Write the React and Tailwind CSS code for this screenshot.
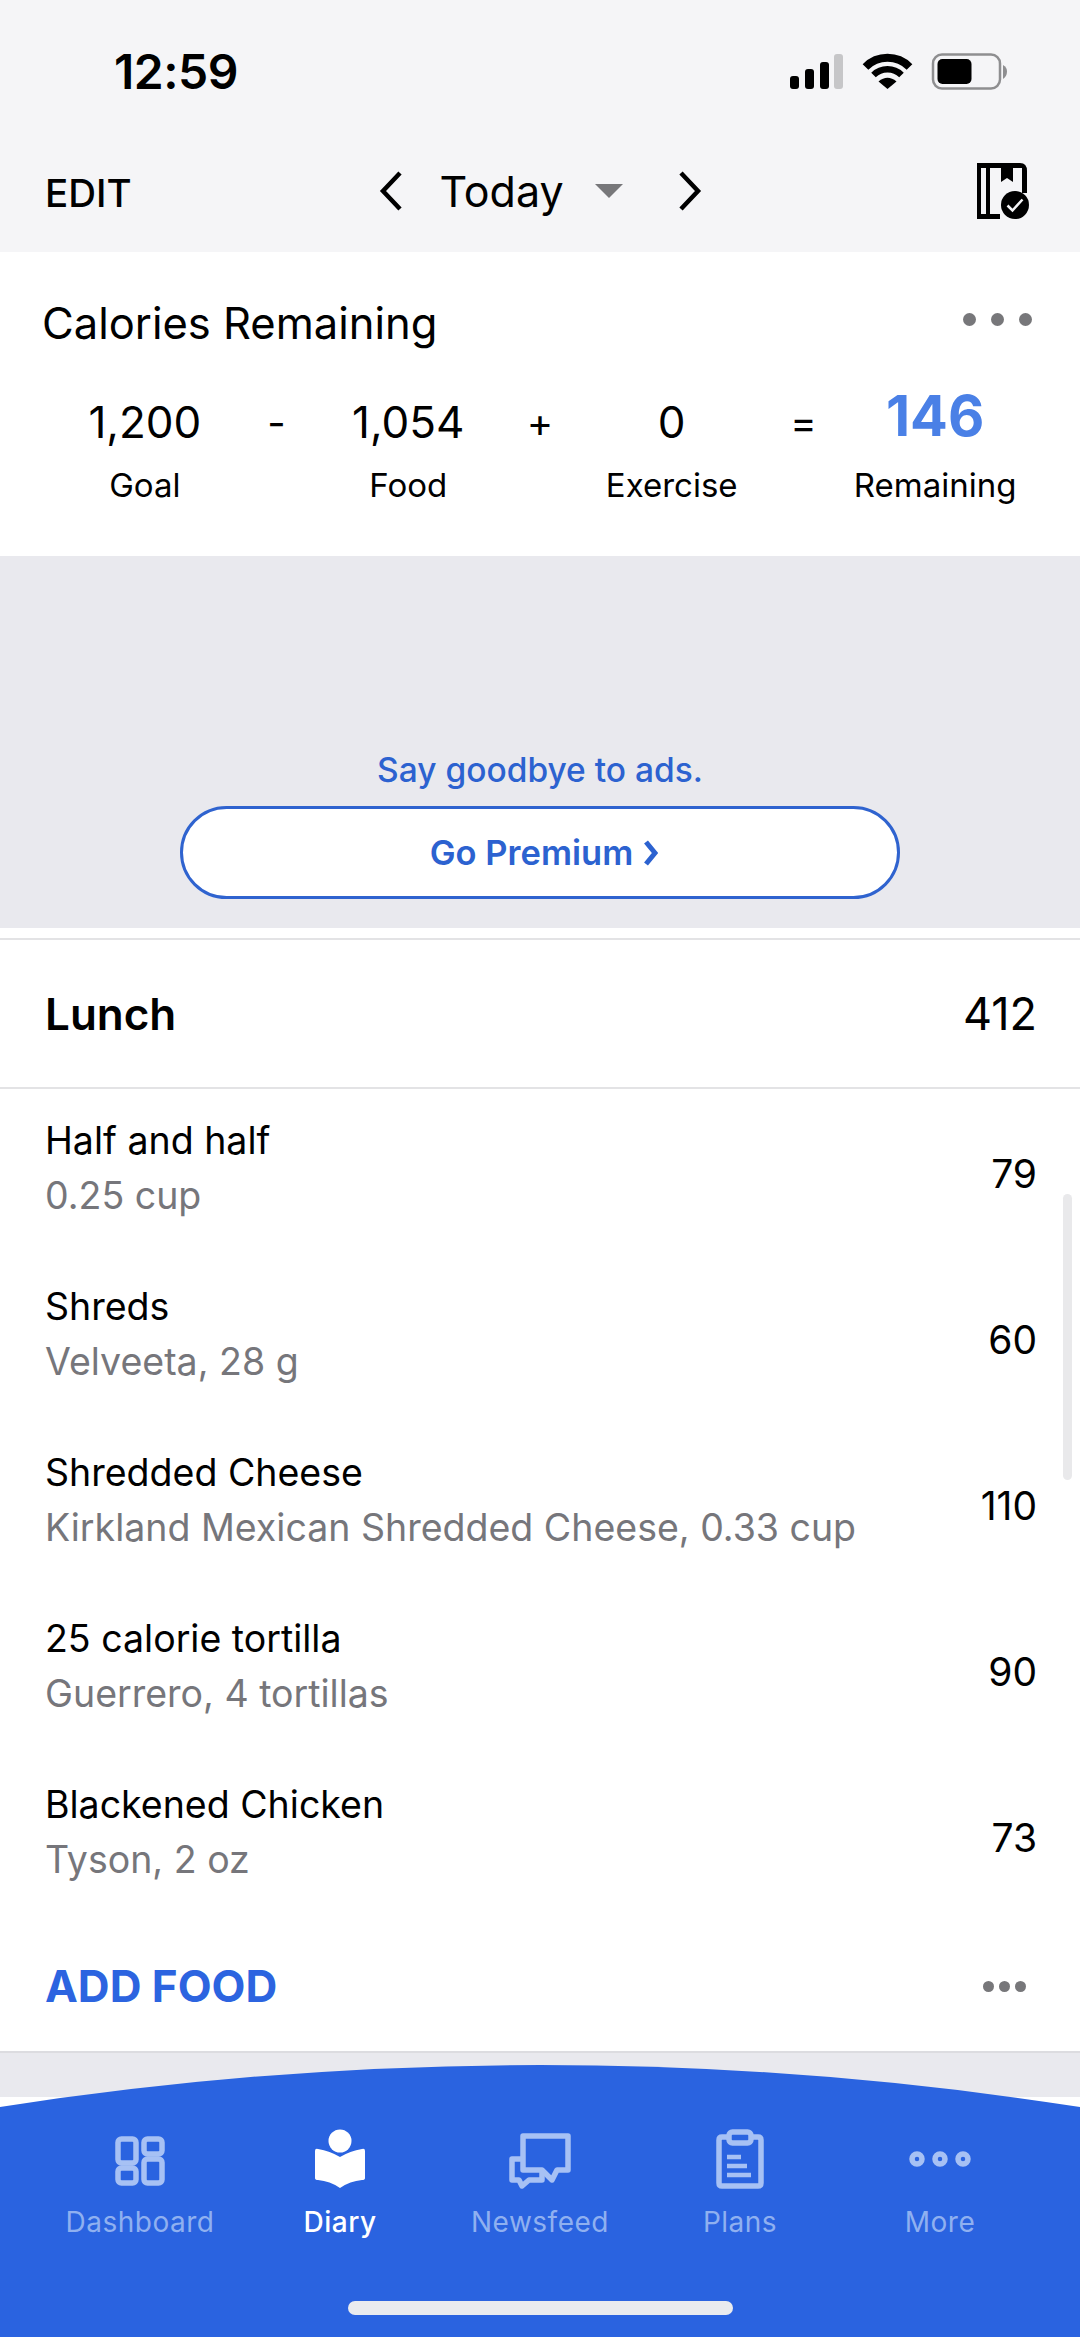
import React from 'react';

const font = { fontFamily: 'Inter, "Liberation Sans", sans-serif' };

const stats = [
  { value: '1,200', label: 'Goal' },
  { op: '-' },
  { value: '1,054', label: 'Food' },
  { op: '+' },
  { value: '0', label: 'Exercise' },
  { op: '=' },
  { value: '146', label: 'Remaining', highlight: true },
];

const foods = [
  { name: 'Half and half', detail: '0.25 cup', cal: 79 },
  { name: 'Shreds', detail: 'Velveeta, 28 g', cal: 60 },
  { name: 'Shredded Cheese', detail: 'Kirkland Mexican Shredded Cheese, 0.33 cup', cal: 110 },
  { name: '25 calorie tortilla', detail: 'Guerrero, 4 tortillas', cal: 90 },
  { name: 'Blackened Chicken', detail: 'Tyson, 2 oz', cal: 73 },
];

function StatusIcons() {
  return (
    <svg width="218" height="38" viewBox="0 0 218 38" className="block">
      <rect x="0" y="23" width="9" height="13" rx="3" fill="#000" />
      <rect x="15" y="16" width="9" height="20" rx="3" fill="#000" />
      <rect x="30" y="9" width="9" height="27" rx="3" fill="#000" />
      <rect x="44" y="1" width="9" height="35" rx="3" fill="#c6c6c8" />
      <path d="M75.500 14 A31 31 0 0 1 119.500 14" fill="none" stroke="#000" strokeWidth="8" />
      <path d="M83.500 22 A20 20 0 0 1 111.500 22" fill="none" stroke="#000" strokeWidth="6.500" />
      <path d="M88.500 28.500 Q97.500 21 106.500 28.500 L97.500 36 Z" fill="#000" />
      <rect x="143" y="1.500" width="67" height="34" rx="9" fill="none" stroke="#8e8e90" strokeWidth="2.500" />
      <rect x="147.500" y="6" width="34" height="25" rx="5" fill="#000" />
      <path d="M213 12 Q217 14 217 18.500 Q217 23 213 26 Z" fill="#8e8e90" />
    </svg>
  );
}

function DiaryCheckIcon() {
  return (
    <svg width="54" height="57" viewBox="0 0 54 57" className="block">
      <path d="M1 0H44Q51 0 51 8V30H46V5H37V19L31 15L25 19V5H14V51H24V56H1ZM5 5V51H10V5Z" fill="#000" fillRule="evenodd" />
      <circle cx="39" cy="42" r="14" fill="#000" />
      <path d="M31.500 42.500L36.500 47.500L46.500 36.500" fill="none" stroke="#f5f5f7" strokeWidth="2.500" />
    </svg>
  );
}

function DashboardIcon() {
  return (
    <svg width="50" height="50" viewBox="0 0 50 50" fill="none" stroke="#a7c1f4" strokeWidth="5.500" className="block mt-[4px]">
      <rect x="3" y="3" width="18" height="24" rx="3.500" />
      <rect x="29" y="3" width="18" height="15" rx="3.500" />
      <rect x="3" y="32" width="18" height="15" rx="3.500" />
      <rect x="29" y="23" width="18" height="24" rx="3.500" />
    </svg>
  );
}

function DiaryIcon() {
  return (
    <svg width="52" height="60" viewBox="0 0 52 60" className="block">
      <circle cx="26" cy="12" r="11.500" fill="#fff" />
      <path d="M1 22Q1 19 4 20Q16 22 26 28Q36 22 48 20Q51 19 51 22V49Q51 51 48 51Q36 52 26 59Q16 52 4 51Q1 51 1 49Z" fill="#fff" />
    </svg>
  );
}

function NewsfeedIcon() {
  return (
    <svg width="62" height="56" viewBox="0 0 62 56" fill="none" stroke="#a7c1f4" strokeWidth="5.500" strokeLinejoin="round" className="block mt-[3px]">
      <path d="M14 3H59V37H48L43 47L33 37H14Z" />
      <path d="M14 26H3V47H10L13 53L20 47H33V38" />
    </svg>
  );
}

function PlansIcon() {
  return (
    <svg width="48" height="60" viewBox="0 0 48 60" fill="none" stroke="#a7c1f4" strokeWidth="5.500" className="block">
      <path d="M12 8H6Q3 8 3 11V54Q3 57 6 57H42Q45 57 45 54V11Q45 8 42 8H36" />
      <rect x="13" y="3" width="22" height="11" rx="3.500" />
      <path d="M11 28H25M11 37H31M11 46H35" strokeWidth="4.500" />
    </svg>
  );
}

function MoreIcon() {
  return (
    <svg width="62" height="16" viewBox="0 0 62 16" fill="none" stroke="#a7c1f4" strokeWidth="5.500" className="block">
      <circle cx="8" cy="8" r="5" />
      <circle cx="31" cy="8" r="5" />
      <circle cx="54" cy="8" r="5" />
    </svg>
  );
}

const tabs = [
  { label: 'Dashboard', icon: DashboardIcon },
  { label: 'Diary', icon: DiaryIcon, active: true },
  { label: 'Newsfeed', icon: NewsfeedIcon },
  { label: 'Plans', icon: PlansIcon },
  { label: 'More', icon: MoreIcon },
];

function Dots({ size }) {
  return (
    <div className={`flex ${size === 'lg' ? 'gap-[15px] mb-[8px]' : 'gap-[5px]'}`}>
      {[0, 1, 2].map(i => (
        <span
          key={i}
          className={`rounded-full bg-[#77777a] ${size === 'lg' ? 'w-[13px] h-[13px]' : 'w-[11px] h-[11px]'}`}
        />
      ))}
    </div>
  );
}

export default function App() {
  return (
    <div className="relative w-[1080px] h-[2337px] overflow-hidden bg-white text-black" style={font}>
      {/* Status + nav */}
      <header className="h-[252px] bg-[#f5f5f7]">
        <div className="h-[144px] flex items-start justify-between pl-[114px] pr-[72px] pt-[47px]">
          <span className="text-[48px] leading-[50px] font-semibold tracking-[-0.5px]">12:59</span>
          <div className="pt-[6px]"><StatusIcons /></div>
        </div>
        <div className="flex items-center justify-between pl-[45px] pr-[50px] h-[94px]">
          <span className="w-[60px] mt-[6px] whitespace-nowrap text-[38.5px] font-medium">EDIT</span>
          <div className="flex items-center">
            <svg width="24" height="40" viewBox="0 0 24 40" fill="none" stroke="#000" strokeWidth="4.500" className="block">
              <path d="M21 2L4 20L21 38" />
            </svg>
            <span className="ml-[36px] text-[43px] leading-none font-normal">Today</span>
            <span className="ml-[31px] w-0 h-0 border-l-[14px] border-r-[14px] border-t-[14px] border-l-transparent border-r-transparent border-t-[#77777a]" />
            <svg width="24" height="40" viewBox="0 0 24 40" fill="none" stroke="#000" strokeWidth="4.500" className="block ml-[55px]">
              <path d="M3 2L20 20L3 38" />
            </svg>
          </div>
          <DiaryCheckIcon />
        </div>
      </header>

      {/* Calories */}
      <section className="h-[304px] pt-[46px]">
        <div className="flex items-center justify-between pl-[42px] pr-[48px]">
          <h1 className="text-[43.500px] leading-[50px] font-normal">Calories Remaining</h1>
          <Dots size="lg" />
        </div>
        <div className="grid grid-cols-7 px-[79px] mt-[38px]">
          {stats.map((s, i) =>
            s.op ? (
              <div key={i} className="flex justify-center pt-[12px] text-[40px] leading-[50px]">{s.op}</div>
            ) : (
              <div key={i} className="flex flex-col items-center whitespace-nowrap">
                <div className="h-[72px] flex items-center">
                  {s.highlight ? (
                    <span className="text-[56px] leading-none font-bold text-[#4a80e6] -mt-[12px]">{s.value}</span>
                  ) : (
                    <span className="text-[44px] leading-none">{s.value}</span>
                  )}
                </div>
                <span className="mt-[7px] text-[33px] leading-[40px]">{s.label}</span>
              </div>
            )
          )}
        </div>
      </section>

      {/* Ad */}
      <section className="h-[372px] bg-[#e9e9ee] flex flex-col items-center justify-end pb-[29px]">
        <p className="text-[33.5px] leading-[40px] font-medium text-[#2c62d0] mb-[16px]">Say goodbye to ads.</p>
        <button className="w-[720px] h-[93px] rounded-full bg-white border-[3px] border-[#2f63cf] flex items-center justify-center gap-[10px] pl-[8px] text-[#2c62d0] text-[34.5px] font-semibold">
          Go Premium
          <svg width="15" height="26" viewBox="0 0 15 26" fill="none" stroke="#2c62d0" strokeWidth="5" className="block">
            <path d="M3 2L12 13L3 24" />
          </svg>
        </button>
      </section>

      {/* Lunch */}
      <section className="pt-[10px]">
        <div className="h-[151px] border-y-[2px] border-[#e3e3e5] flex items-center justify-between pl-[45px] pr-[43px]">
          <span className="text-[44px] font-semibold">Lunch</span>
          <span className="text-[45px]">412</span>
        </div>
        <ul className="pt-[2px]">
          {foods.map(f => (
            <li key={f.name} className="h-[166px] flex items-center justify-between pl-[45px] pr-[43px]">
              <div className="pb-[12px]">
                <p className="text-[37.5px] leading-[55px]">{f.name}</p>
                <p className="text-[37.5px] leading-[55px] text-[#76767b]">{f.detail}</p>
              </div>
              <span className="text-[39px]">{f.cal}</span>
            </li>
          ))}
        </ul>
        <div className="h-[130px] flex items-center justify-between pl-[45px] pr-[54px]">
          <span className="text-[44px] font-bold text-[#2c64e0]">ADD FOOD</span>
          <Dots />
        </div>
        <div className="h-[46px] bg-[#e9e9ee] border-t-[2px] border-[#dcdce0]" />
      </section>

      {/* Scrollbar */}
      <div className="absolute left-[1063px] top-[1194px] w-[9px] h-[286px] rounded-full bg-[#e9e9eb]" />

      {/* Tab bar */}
      <nav className="absolute left-0 right-0 bottom-0 h-[272px]">
        <svg width="1080" height="43" viewBox="0 0 1080 43" className="block">
          <path d="M0 42Q540 -42 1080 42V43H0Z" fill="#2a63e0" />
        </svg>
        <div className="relative h-[229px] bg-[#2a63e0]">
          <div className="grid grid-cols-5 px-[40px] pt-[21px]">
            {tabs.map(({ label, icon: Icon, active }) => (
              <div key={label} className="flex flex-col items-center">
                <div className="h-[60px] flex items-center justify-center"><Icon /></div>
                <span className={`mt-[15px] text-[28px] leading-[36px] tracking-[0.5px] ${active ? 'text-white font-medium' : 'text-[#8fb0f0]'}`}>{label}</span>
              </div>
            ))}
          </div>
          <div className="absolute left-[348px] top-[193px] w-[385px] h-[14px] rounded-full bg-[#e9ebef]" />
        </div>
      </nav>
    </div>
  );
}
